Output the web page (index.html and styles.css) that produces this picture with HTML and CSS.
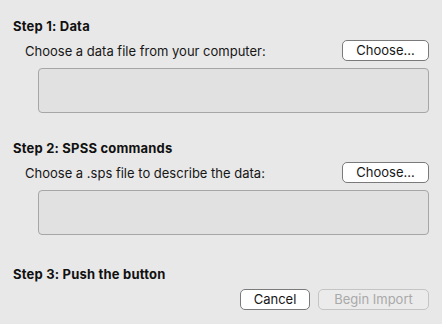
FILE: index.html
```html
<!DOCTYPE html>
<html>
<head>
<meta charset="utf-8">
<link rel="stylesheet" href="styles.css">
</head>
<body>
<div class="dialog">
  <section class="step step-1">
    <h2 class="step-title">Step 1: Data</h2>
    <div class="row">
      <span class="label">Choose a data file from your computer:</span>
      <button class="btn btn-choose">Choose...</button>
    </div>
    <div class="field"></div>
  </section>
  <section class="step step-2">
    <h2 class="step-title">Step 2: SPSS commands</h2>
    <div class="row">
      <span class="label">Choose a .sps file to describe the data:</span>
      <button class="btn btn-choose">Choose...</button>
    </div>
    <div class="field"></div>
  </section>
  <section class="step step-3">
    <h2 class="step-title">Step 3: Push the button</h2>
    <div class="actions">
      <button class="btn btn-cancel">Cancel</button>
      <button class="btn btn-import" disabled>Begin Import</button>
    </div>
  </section>
</div>
</body>
</html>
```
FILE: styles.css
```css
html, body {
  margin: 0;
  padding: 0;
  background: #e8e8e8;
}
body {
  width: 442px;
  height: 324px;
  overflow: hidden;
  font-family: Inter, "Liberation Sans", sans-serif;
  font-size: 13px;
  color: #161616;
}
.dialog {
  padding: 18px 13px 0 13px;
  display: flex;
  flex-direction: column;
}
.step {
  display: flex;
  flex-direction: column;
}
.step-2 { margin-top: 27px; }
.step-3 { margin-top: 31px; }
.step-title {
  margin: 0;
  font-size: 13px;
  font-weight: 700;
  line-height: 16px;
  letter-spacing: 0.2px;
  color: #111;
}
.row {
  display: flex;
  align-items: center;
  justify-content: space-between;
  margin-top: 6px;
  padding-left: 12px;
}
.label {
  line-height: 16px;
  color: #161616;
}
.btn {
  font-family: Inter, "Liberation Sans", sans-serif;
  font-size: 13px;
  height: 21px;
  line-height: 19px;
  padding: 0;
  border: 1px solid #7a7a7a;
  border-radius: 5px;
  background: #ffffff;
  color: #161616;
  box-sizing: border-box;
}
.btn-choose { width: 87px; }
.field {
  margin: 7px 0 0 25px;
  height: 45px;
  box-sizing: border-box;
  border: 1px solid #a6a6a6;
  border-radius: 4px;
  background: #e1e1e1;
}
.actions {
  display: flex;
  justify-content: flex-end;
  gap: 8px;
  margin-top: 7px;
}
.btn-cancel { width: 70px; }
.btn-import {
  width: 111px;
  background: #ebebeb;
  border-color: #c4c4c4;
  color: #a9a9a9;
}
```
